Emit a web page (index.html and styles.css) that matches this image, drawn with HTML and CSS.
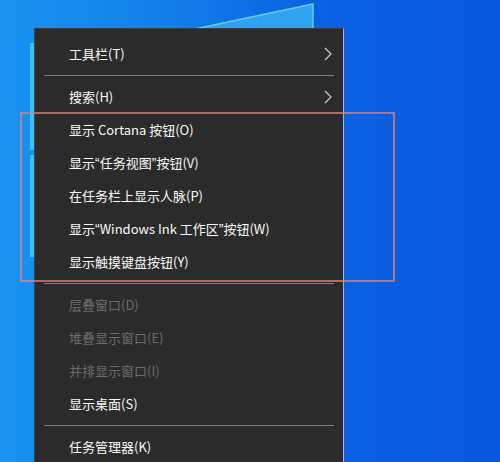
FILE: index.html
```html
<!DOCTYPE html>
<html lang="zh-CN">
<head>
  <meta charset="UTF-8" />
  <meta name="viewport" content="width=device-width, initial-scale=1.0"/>
  <title>任务栏菜单</title>
  <link rel="stylesheet" href="styles.css">
</head>
<body>
<div class="desktop">
  <svg class="panes" width="500" height="462" viewBox="0 0 500 462">
    <polygon points="190,30 313,4 313,30" fill="#2fa2f0"/>
    <polyline points="190,30 313,4 313,30" fill="none" stroke="#5ccdf7" stroke-width="1.5"/>
    <rect x="30" y="43" width="4" height="107" fill="#3fbff2"/>
    <rect x="30" y="155" width="4" height="102" fill="#3fbff2"/>
  </svg>

  <div class="menu">
    <div class="item">
      <span>工具栏(T)</span>
      <svg class="chev" width="8" height="14" viewBox="0 0 8 14"><polyline points="1,1 7,7 1,13" fill="none" stroke="#d0d0d0" stroke-width="1.2"/></svg>
    </div>
    <div class="sep"></div>
    <div class="item">
      <span>搜索(H)</span>
      <svg class="chev" width="8" height="14" viewBox="0 0 8 14"><polyline points="1,1 7,7 1,13" fill="none" stroke="#d0d0d0" stroke-width="1.2"/></svg>
    </div>
    <div class="item">显示 Cortana 按钮(O)</div>
    <div class="item"><span>显示<span class="q">“</span>任务视图<span class="q">”</span>按钮(V)</span></div>
    <div class="item">在任务栏上显示人脉(P)</div>
    <div class="item"><span>显示<span class="q">“</span>Windows Ink 工作区<span class="q">”</span>按钮(W)</span></div>
    <div class="item">显示触摸键盘按钮(Y)</div>
    <div class="sep"></div>
    <div class="item disabled">层叠窗口(D)</div>
    <div class="item disabled">堆叠显示窗口(E)</div>
    <div class="item disabled">并排显示窗口(I)</div>
    <div class="item">显示桌面(S)</div>
    <div class="sep"></div>
    <div class="item">任务管理器(K)</div>
  </div>

  <div class="mark"></div>
</div>
</body>
</html>
```

FILE: styles.css
```css
body {
  margin: 0;
  width: 500px;
  height: 462px;
  overflow: hidden;
  font-family: "Noto Sans CJK SC", "Noto Sans", sans-serif;
}

.desktop {
  position: relative;
  width: 500px;
  height: 462px;
  background: linear-gradient(to right, #1a92f1 0%, #1282ea 30%, #0a62e2 62%, #0a56dc 100%);
}

.panes {
  position: absolute;
  left: 0;
  top: 0;
}

.menu {
  position: absolute;
  left: 34px;
  top: 28px;
  width: 310px;
  height: 450px;
  padding-top: 8px;
  box-sizing: border-box;
  background-color: #2b2b2b;
  border-left: 1px solid #3a4550;
  border-right: 1px solid #a9b4c2;
  border-top: 1px solid #3a3f46;
  display: flex;
  flex-direction: column;
}

.item {
  height: 33px;
  flex-shrink: 0;
  display: flex;
  align-items: center;
  justify-content: space-between;
  padding: 0 11px 0 34px;
  color: #fafafa;
  font-size: 13px;
  white-space: nowrap;
}

.item.disabled {
  color: #6b6b6b;
}

.q {
  font-family: "Liberation Sans", sans-serif;
  font-size: 14px;
}

.chev {
  display: block;
}

.sep {
  height: 1px;
  flex-shrink: 0;
  margin: 5px 9px 4px 9px;
  background-color: #7c7c7c;
}

.mark {
  position: absolute;
  left: 20px;
  top: 112px;
  width: 371px;
  height: 166px;
  border: 2px solid rgba(228, 130, 115, 0.72);
}
```
